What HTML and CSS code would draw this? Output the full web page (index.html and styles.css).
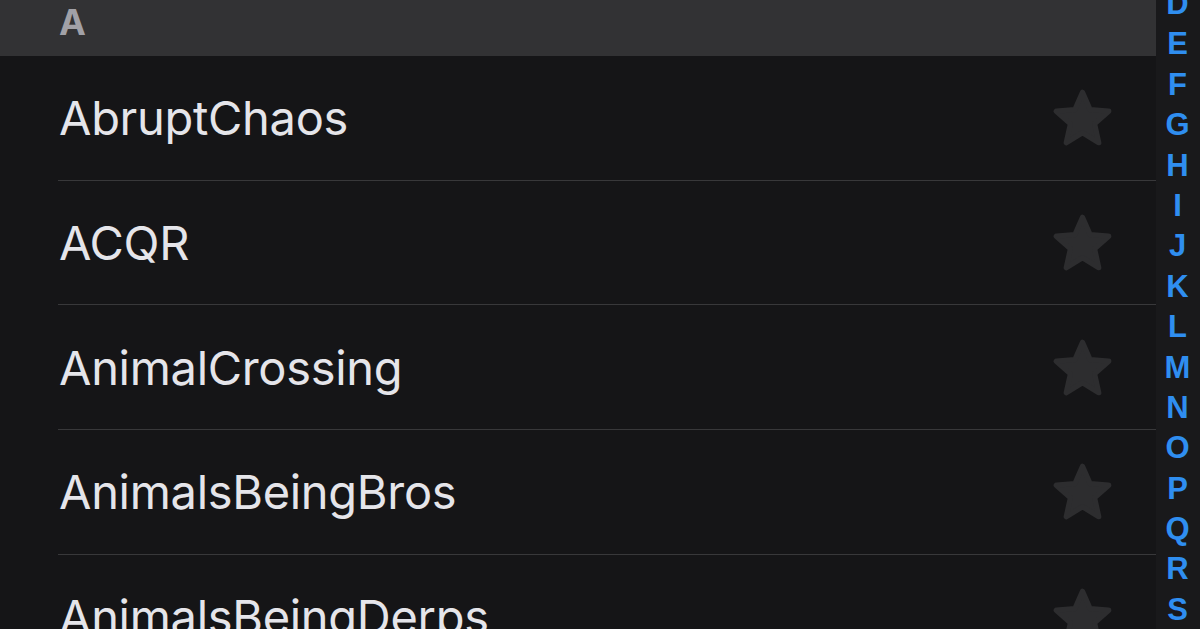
FILE: index.html
```html
<!DOCTYPE html>
<html>
<head>
<meta charset="utf-8">
<link rel="stylesheet" href="styles.css">
</head>
<body>
<div class="screen">
  <div class="main">
    <div class="section-header"><span class="section-letter">A</span></div>
    <ul class="list">
      <li class="row"><span class="name">AbruptChaos</span><svg class="star" viewBox="0 0 60 56"><polygon points="30,4 37.2,20.5 55,22 41.5,34 45.5,52 30,42.5 14.5,52 18.5,34 5,22 22.8,20.5"/></svg></li>
      <li class="row"><span class="name">ACQR</span><svg class="star" viewBox="0 0 60 56"><polygon points="30,4 37.2,20.5 55,22 41.5,34 45.5,52 30,42.5 14.5,52 18.5,34 5,22 22.8,20.5"/></svg></li>
      <li class="row"><span class="name">AnimalCrossing</span><svg class="star" viewBox="0 0 60 56"><polygon points="30,4 37.2,20.5 55,22 41.5,34 45.5,52 30,42.5 14.5,52 18.5,34 5,22 22.8,20.5"/></svg></li>
      <li class="row"><span class="name">AnimalsBeingBros</span><svg class="star" viewBox="0 0 60 56"><polygon points="30,4 37.2,20.5 55,22 41.5,34 45.5,52 30,42.5 14.5,52 18.5,34 5,22 22.8,20.5"/></svg></li>
      <li class="row"><span class="name">AnimalsBeingDerps</span><svg class="star" viewBox="0 0 60 56"><polygon points="30,4 37.2,20.5 55,22 41.5,34 45.5,52 30,42.5 14.5,52 18.5,34 5,22 22.8,20.5"/></svg></li>
    </ul>
  </div>
  <nav class="index">
    <span>D</span><span>E</span><span>F</span><span>G</span><span>H</span><span>I</span><span>J</span><span>K</span><span>L</span><span>M</span><span>N</span><span>O</span><span>P</span><span>Q</span><span>R</span><span>S</span>
  </nav>
</div>
</body>
</html>
```
FILE: styles.css
```css
html, body {
  margin: 0;
  padding: 0;
  background: #151517;
  overflow: hidden;
}
body {
  width: 1200px;
  height: 629px;
  font-family: Inter, Roboto, "Liberation Sans", sans-serif;
}
.screen {
  display: flex;
  height: 629px;
  overflow: hidden;
}
.main {
  width: 1156px;
  flex: none;
}
.section-header {
  height: 56px;
  background: #323234;
  display: flex;
  align-items: center;
  padding-left: 59px;
}
.section-letter {
  color: #a1a1a7;
  font-size: 36px;
  font-weight: 700;
  line-height: 1;
  margin-top: -12px;
}
.list {
  list-style: none;
  margin: 0;
  padding: 0 0 0 58px;
}
.row {
  height: 123.7px;
  border-bottom: 1.3px solid #38383a;
  display: flex;
  align-items: center;
  justify-content: space-between;
}
.name {
  color: #e5e5ea;
  font-size: 47px;
  font-weight: 400;
  letter-spacing: -0.3px;
  margin-left: 1px;
}
.star {
  width: 63px;
  height: 59px;
  margin-right: 42px;
}
.star polygon {
  fill: #2d2d2f;
  stroke: #2d2d2f;
  stroke-width: 5;
  stroke-linejoin: round;
}
.index {
  flex: 1;
  background: #19191b;
  display: flex;
  flex-direction: column;
  align-items: center;
  margin-top: -16px;
  padding-right: 1px;
}
.index span {
  color: #2f8ef0;
  font-family: "Liberation Sans", Arial, sans-serif;
  font-size: 31px;
  font-weight: 700;
  line-height: 40.4px;
  height: 40.4px;
}
```
